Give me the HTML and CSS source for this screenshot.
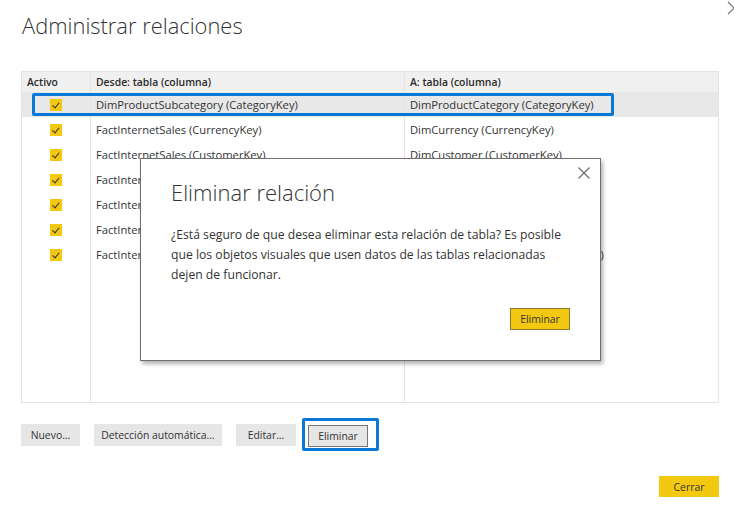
FILE: index.html
```html
<!DOCTYPE html>
<html lang="es">
<head>
<meta charset="utf-8">
<link rel="stylesheet" href="styles.css">
</head>
<body>
<div class="page">
  <svg class="close-top" width="14" height="14" viewBox="0 0 14 14"><path d="M1 1 L13 13 M13 1 L1 13" stroke="#777" stroke-width="1.2" fill="none"/></svg>
  <h1 class="title">Administrar relaciones</h1>

  <div class="table">
    <div class="cell head c1">Activo</div>
    <div class="cell head c2">Desde: tabla (columna)</div>
    <div class="cell head c3">A: tabla (columna)</div>

    <div class="cell c1 sel"><span class="chk"></span></div>
    <div class="cell c2 sel">DimProductSubcategory (CategoryKey)</div>
    <div class="cell c3 sel">DimProductCategory (CategoryKey)</div>

    <div class="cell c1"><span class="chk"></span></div>
    <div class="cell c2">FactInternetSales (CurrencyKey)</div>
    <div class="cell c3">DimCurrency (CurrencyKey)</div>

    <div class="cell c1"><span class="chk"></span></div>
    <div class="cell c2">FactInternetSales (CustomerKey)</div>
    <div class="cell c3">DimCustomer (CustomerKey)</div>

    <div class="cell c1"><span class="chk"></span></div>
    <div class="cell c2">FactInternetSales (DueDateKey)</div>
    <div class="cell c3">DimDate (DateKey)</div>

    <div class="cell c1"><span class="chk"></span></div>
    <div class="cell c2">FactInternetSales (OrderDateKey)</div>
    <div class="cell c3">DimDate (DateKey)</div>

    <div class="cell c1"><span class="chk"></span></div>
    <div class="cell c2">FactInternetSales (ProductKey)</div>
    <div class="cell c3">DimProduct (ProductKey)</div>

    <div class="cell c1"><span class="chk"></span></div>
    <div class="cell c2">FactInternetSales (PromotionKey)</div>
    <div class="cell c3">DimSalesTerritory (SalesTerritoryKey)</div>

    <div class="cell c1 fill"></div>
    <div class="cell c2 fill"></div>
    <div class="cell c3 fill"></div>

    <div class="row-mark"></div>
  </div>

  <div class="actions">
    <button class="btn w59">Nuevo...</button>
    <button class="btn w128">Detección automática...</button>
    <button class="btn w60">Editar...</button>
    <div class="mark-btn"><button class="btn outlined">Eliminar</button></div>
  </div>

  <div class="footer">
    <button class="btn primary">Cerrar</button>
  </div>

  <div class="dialog">
    <svg class="dlg-close" width="12" height="12" viewBox="0 0 12 12"><path d="M0.5 0.5 L11.5 11.5 M11.5 0.5 L0.5 11.5" stroke="#666" stroke-width="1.1" fill="none"/></svg>
    <h2 class="dlg-title">Eliminar relación</h2>
    <p class="dlg-text">¿Está seguro de que desea eliminar esta relación de tabla? Es posible<br>que los objetos visuales que usen datos de las tablas relacionadas<br>dejen de funcionar.</p>
    <div class="dlg-actions"><button class="btn primary bordered">Eliminar</button></div>
  </div>
</div>
</body>
</html>
```
FILE: styles.css
```css
* { box-sizing: border-box; }
html, body { margin: 0; padding: 0; background: #fff; }
body { font-family: "Open Sans", "Noto Sans", sans-serif; color: #333; }
.page { position: relative; width: 734px; height: 507px; overflow: hidden; padding: 0 15px 0 21px; }

.close-top { position: absolute; right: -7px; top: 1px; }

.title {
  margin: 0; padding: 11px 0 0 1px; height: 71px;
  font-weight: 300; font-size: 21.9px; color: #333;
}

.table {
  position: relative;
  width: 698px; height: 332px;
  border: 1px solid #e3e3e3;
  display: grid;
  grid-template-columns: 68px 314px 1fr;
  grid-template-rows: 20px repeat(7, 25px) 1fr;
  font-size: 11.2px;
}
.cell { display: flex; align-items: center; white-space: nowrap; overflow: hidden; color: #333; }
.c2, .c3 { border-left: 1px solid #e3e3e3; padding-left: 5px; }
.c1 { justify-content: center; }
.head { background: #f0f0f0; font-weight: 600; font-size: 10.4px; color: #2b2b2b; }
.head.c1 { justify-content: flex-start; padding-left: 5px; }
.sel { background: #e8e8e8; }
.chk {
  width: 12px; height: 12px; background: #f2c811; position: relative;
}
.chk::after {
  content: ""; position: absolute; left: 3.5px; top: 2px;
  width: 3px; height: 5.5px; border: solid #333; border-width: 0 1.6px 1.6px 0;
  transform: rotate(40deg);
}
.row-mark {
  position: absolute; left: 10px; top: 21px; width: 582px; height: 23px;
  border: 3px solid #0a78d7; border-radius: 2px; pointer-events: none;
}

.btn {
  font-family: inherit; font-size: 10.4px; color: #333;
  background: #e6e6e6; border: none; height: 22px; padding: 0; margin: 0;
  display: inline-flex; align-items: center; justify-content: center; white-space: nowrap;
}
.w59 { width: 59px; }
.w60 { width: 60px; }
.w128 { width: 128px; }
.actions { display: flex; align-items: center; margin-top: 16px; gap: 14px; height: 31px; }
.mark-btn {
  border: 3px solid #0a78d7; border-radius: 2px; padding: 2px 8px 1px 3px; margin-left: -8px;
}
.btn.outlined { border: 1px solid #777; height: 22px; width: 60px; background: #e6e6e6; }

.footer { display: flex; justify-content: flex-end; margin-top: 26px; }
.btn.primary { background: #f2c811; width: 60px; height: 21px; }
.btn.bordered { border: 1px solid #8b7a2c; height: 22px; }

.dialog {
  position: absolute; left: 140px; top: 158px; width: 461px; height: 203px;
  background: #fff; border: 1px solid #707070;
  box-shadow: 2px 3px 4px rgba(0,0,0,0.3);
  padding: 15px 30px 0 30px;
}
.dlg-close { position: absolute; right: 10px; top: 8px; }
.dlg-title { margin: 0; font-weight: 300; font-size: 22px; color: #333; line-height: 36px; }
.dlg-text { margin: 15px 0 0; font-size: 12.2px; line-height: 20px; color: #333; white-space: nowrap; }
.dlg-actions { display: flex; justify-content: flex-end; margin-top: 23px; }
```
